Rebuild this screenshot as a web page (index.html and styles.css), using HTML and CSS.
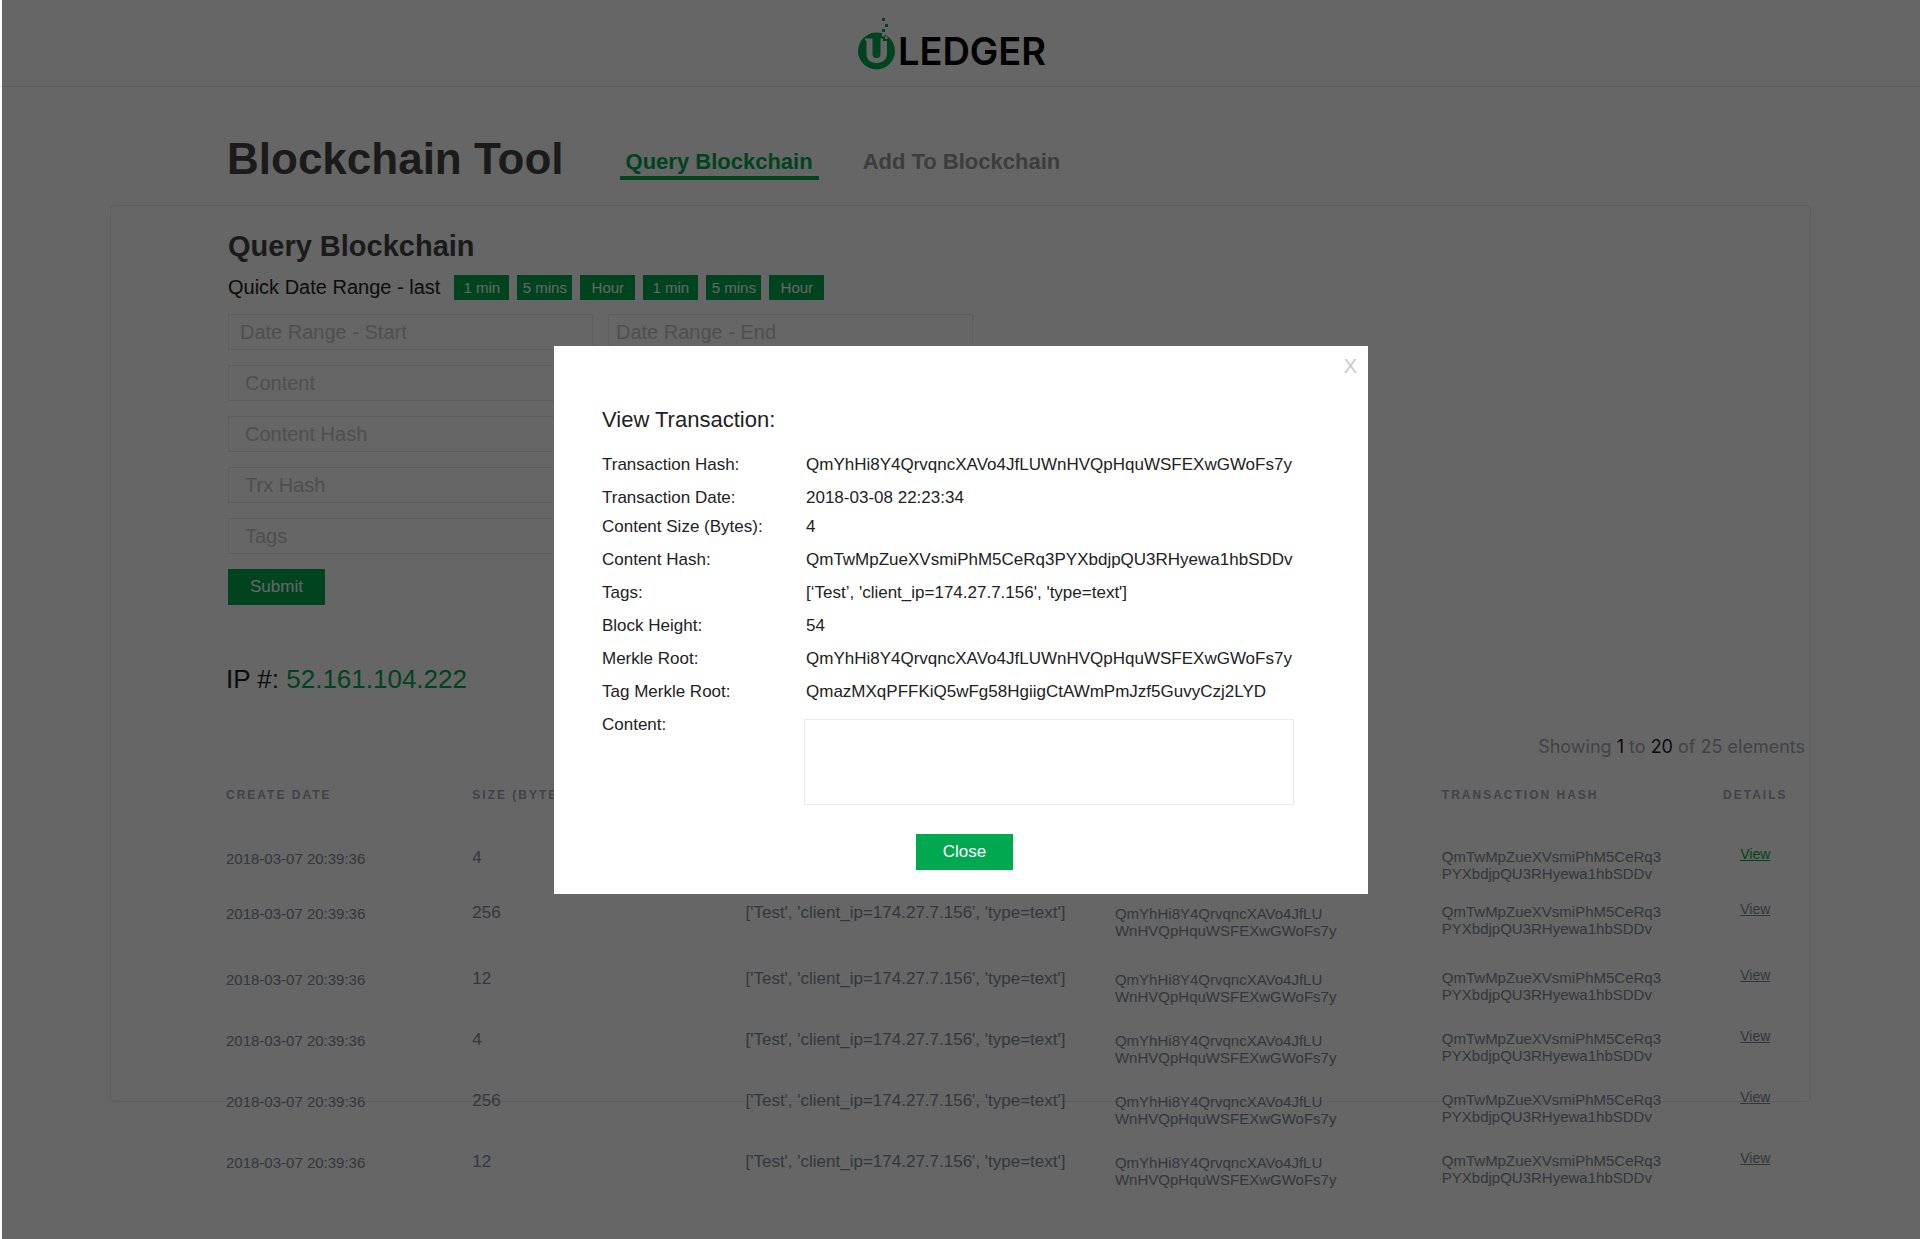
FILE: index.html
```html
<!DOCTYPE html>
<html lang="en">
<head>
<meta charset="utf-8">
<meta name="viewport" content="width=device-width, initial-scale=1">
<title>ULedger - Blockchain Tool</title>
<link rel="stylesheet" href="styles.css">
</head>
<body>
<header class="site-header">
  <a class="brand" href="#" aria-label="ULedger home">
    <svg class="brand-mark" viewBox="0 0 38 53" width="38" height="53" aria-hidden="true">
      <circle cx="18.500" cy="34" r="18.500" fill="#00a94f"/>
      <path fill="#fff" d="M7 21.500h7.500V36.500c0 3 1.200 4.500 4 4.500s4-1.500 4-4.500V24h6.500v12.500c0 6-4 9.500-10.500 9.500S8.500 42.500 8.500 36.500V24L7 23z"/>
      <path fill="#00a94f" d="M24 1h3v3h-3zM27 7h3v3h-3zM24 12h3v3h-3z"/>
      <path fill="#fff" d="M24 17h2.500v2.500H24zM27 19.500h2.500V22H27zM22.500 21.500H25V24h-2.500z"/>
    </svg>
    <span class="brand-name">LEDGER</span>
  </a>
</header>

<div class="title-bar">
  <h1 class="page-title">Blockchain Tool</h1>
  <nav class="tabs">
    <a class="tab tab-active" href="#query">Query Blockchain</a>
    <a class="tab" href="#add">Add To Blockchain</a>
  </nav>
</div>

<main class="panel">
  <section class="query" id="query">
    <h2 class="panel-title">Query Blockchain</h2>
    <div class="quick-range">
      <span class="quick-label">Quick Date Range - last</span>
      <div class="chips">
        <button class="chip" type="button">1 min</button>
        <button class="chip" type="button">5 mins</button>
        <button class="chip" type="button">Hour</button>
        <button class="chip" type="button">1 min</button>
        <button class="chip" type="button">5 mins</button>
        <button class="chip" type="button">Hour</button>
      </div>
    </div>
    <form class="query-form">
      <div class="date-fields">
        <input class="field field-start" type="text" placeholder="Date Range - Start" aria-label="Date Range - Start">
        <input class="field field-end" type="text" placeholder="Date Range - End" aria-label="Date Range - End">
      </div>
      <input class="field" type="text" placeholder="Content" aria-label="Content">
      <input class="field" type="text" placeholder="Content Hash" aria-label="Content Hash">
      <input class="field" type="text" placeholder="Trx Hash" aria-label="Trx Hash">
      <input class="field" type="text" placeholder="Tags" aria-label="Tags">
      <button class="button" type="submit">Submit</button>
    </form>
  </section>

  <p class="ip">IP #: <span class="ip-value">52.161.104.222</span></p>
  <p class="count">Showing <b>1</b> to <b>20</b> of 25 elements</p>

  <table class="results">
    <colgroup>
      <col class="col-date"><col class="col-size"><col class="col-tags"><col class="col-content"><col class="col-trx"><col class="col-details">
    </colgroup>
    <thead>
      <tr><th>Create Date</th><th>Size (Bytes)</th><th>Tags</th><th>Content Hash</th><th>Transaction Hash</th><th class="details">Details</th></tr>
    </thead>
    <tbody>
      <tr class="row-compact">
        <td>2018-03-07 20:39:36</td><td class="value">4</td><td class="value">['Test', 'client_ip=174.27.7.156', 'type=text']</td>
        <td>QmYhHi8Y4QrvqncXAVo4JfLU<br>WnHVQpHquWSFEXwGWoFs7y</td>
        <td class="trx">QmTwMpZueXVsmiPhM5CeRq3<br>PYXbdjpQU3RHyewa1hbSDDv</td>
        <td class="details"><a class="view view-current" href="#">View</a></td>
      </tr>
      <tr class="row-roomy">
        <td>2018-03-07 20:39:36</td><td class="value">256</td><td class="value">['Test', 'client_ip=174.27.7.156', 'type=text']</td>
        <td>QmYhHi8Y4QrvqncXAVo4JfLU<br>WnHVQpHquWSFEXwGWoFs7y</td>
        <td class="trx">QmTwMpZueXVsmiPhM5CeRq3<br>PYXbdjpQU3RHyewa1hbSDDv</td>
        <td class="details"><a class="view" href="#">View</a></td>
      </tr>
      <tr>
        <td>2018-03-07 20:39:36</td><td class="value">12</td><td class="value">['Test', 'client_ip=174.27.7.156', 'type=text']</td>
        <td>QmYhHi8Y4QrvqncXAVo4JfLU<br>WnHVQpHquWSFEXwGWoFs7y</td>
        <td class="trx">QmTwMpZueXVsmiPhM5CeRq3<br>PYXbdjpQU3RHyewa1hbSDDv</td>
        <td class="details"><a class="view" href="#">View</a></td>
      </tr>
      <tr>
        <td>2018-03-07 20:39:36</td><td class="value">4</td><td class="value">['Test', 'client_ip=174.27.7.156', 'type=text']</td>
        <td>QmYhHi8Y4QrvqncXAVo4JfLU<br>WnHVQpHquWSFEXwGWoFs7y</td>
        <td class="trx">QmTwMpZueXVsmiPhM5CeRq3<br>PYXbdjpQU3RHyewa1hbSDDv</td>
        <td class="details"><a class="view" href="#">View</a></td>
      </tr>
      <tr>
        <td>2018-03-07 20:39:36</td><td class="value">256</td><td class="value">['Test', 'client_ip=174.27.7.156', 'type=text']</td>
        <td>QmYhHi8Y4QrvqncXAVo4JfLU<br>WnHVQpHquWSFEXwGWoFs7y</td>
        <td class="trx">QmTwMpZueXVsmiPhM5CeRq3<br>PYXbdjpQU3RHyewa1hbSDDv</td>
        <td class="details"><a class="view" href="#">View</a></td>
      </tr>
      <tr>
        <td>2018-03-07 20:39:36</td><td class="value">12</td><td class="value">['Test', 'client_ip=174.27.7.156', 'type=text']</td>
        <td>QmYhHi8Y4QrvqncXAVo4JfLU<br>WnHVQpHquWSFEXwGWoFs7y</td>
        <td class="trx">QmTwMpZueXVsmiPhM5CeRq3<br>PYXbdjpQU3RHyewa1hbSDDv</td>
        <td class="details"><a class="view" href="#">View</a></td>
      </tr>
    </tbody>
  </table>
</main>

<div class="overlay">
  <section class="modal" role="dialog" aria-modal="true" aria-labelledby="modal-title">
    <button class="modal-x" type="button" aria-label="Close dialog">X</button>
    <h2 class="modal-title" id="modal-title">View Transaction:</h2>
    <dl class="facts">
      <dt>Transaction Hash:</dt><dd>QmYhHi8Y4QrvqncXAVo4JfLUWnHVQpHquWSFEXwGWoFs7y</dd>
      <dt>Transaction Date:</dt><dd>2018-03-08 22:23:34</dd>
      <dt>Content Size (Bytes):</dt><dd>4</dd>
      <dt>Content Hash:</dt><dd>QmTwMpZueXVsmiPhM5CeRq3PYXbdjpQU3RHyewa1hbSDDv</dd>
      <dt>Tags:</dt><dd>[‘Test’, 'client_ip=174.27.7.156', 'type=text']</dd>
      <dt>Block Height:</dt><dd>54</dd>
      <dt>Merkle Root:</dt><dd>QmYhHi8Y4QrvqncXAVo4JfLUWnHVQpHquWSFEXwGWoFs7y</dd>
      <dt>Tag Merkle Root:</dt><dd>QmazMXqPFFKiQ5wFg58HgiigCtAWmPmJzf5GuvyCzj2LYD</dd>
      <dt><label for="content">Content:</label></dt><dd class="fact-content"><textarea class="content-box" id="content"></textarea></dd>
    </dl>
    <div class="modal-actions"><button class="button" type="button">Close</button></div>
  </section>
</div>
</body>
</html>
```
FILE: styles.css
```css
* {
  box-sizing: border-box;
}

body {
  margin: 0;
  min-height: 100vh;
  background: #fff;
  color: #222;
  font-family: "Liberation Sans", Arial, sans-serif;
}

h1, h2, p, dl, dd {
  margin: 0;
}

button {
  border: 0;
  font-family: inherit;
  cursor: pointer;
}

/* Header */
.site-header {
  display: flex;
  justify-content: center;
  padding: 17px 16px 16px 0;
  border-bottom: 1px solid #e9eaf4;
}

.brand {
  display: flex;
  align-items: flex-end;
  gap: 2px;
  color: #000;
  text-decoration: none;
}

.brand-name {
  font: 600 38px/38px Inter, sans-serif;
}

/* Title and tabs */
.title-bar {
  display: flex;
  align-items: flex-end;
  gap: 56px;
  padding: 51px 109px 25px 227px;
}

.page-title {
  color: #444;
  font-size: 44px;
  line-height: 42px;
}

.tabs {
  display: flex;
  gap: 38px;
}

.tab {
  padding: 0 6px 2px;
  border-bottom: 4px solid transparent;
  color: #999;
  font-size: 22px;
  font-weight: bold;
  line-height: 24px;
  text-decoration: none;
}

.tab-active {
  border-color: #00a94f;
  color: #00a94f;
}

/* Query panel: the result rows run on past its lower edge */
.panel {
  height: 897px;
  margin: 0 109px 0 110px;
  padding: 22px 5px 0 115px;
  border: 1px solid #e9eaf4;
  border-radius: 5px;
}

.query {
  padding-left: 2px;
}

.panel-title {
  color: #444;
  font-size: 29px;
  line-height: 36px;
}

.quick-range {
  display: flex;
  align-items: center;
  gap: 14px;
  margin-top: 11px;
}

.quick-label {
  font-size: 20px;
  line-height: 25px;
}

.chips {
  display: flex;
  gap: 8px;
}

.chip {
  width: 55px;
  height: 25px;
  padding: 0;
  background: #00a94f;
  color: #fff;
  font-size: 15px;
}

.query-form {
  display: flex;
  flex-direction: column;
  align-items: flex-start;
  gap: 15px;
  max-width: 745px;
  margin-top: 14px;
}

.date-fields {
  display: grid;
  grid-template-columns: 1fr 1fr;
  gap: 15px;
  width: 100%;
}

.field {
  width: 100%;
  height: 36px;
  padding: 0 16px;
  border: 1px solid #ececec;
  background: #fff;
  font-family: inherit;
  font-size: 20px;
}

.field-start {
  padding: 0 11px;
}

.field-end {
  padding: 0 7px;
}

.field::placeholder {
  color: #c6c6c6;
  opacity: 1;
}

.button {
  width: 97px;
  height: 36px;
  padding: 0;
  background: #00a94f;
  color: #fff;
  font-size: 17px;
}

.ip {
  margin-top: 58px;
  font-size: 26px;
  line-height: 32px;
}

.ip-value {
  color: #00a94f;
}

.count {
  margin-top: 40px;
  color: #a6a6b4;
  font: 18px/24px Inter, sans-serif;
  text-align: right;
}

.count b {
  color: #1c1c2c;
  font-weight: 400;
}

/* Results */
.results {
  width: 100%;
  margin-top: 28px;
  border-collapse: collapse;
  table-layout: fixed;
  color: #838a97;
  font-size: 15px;
  line-height: 17px;
}

.col-date { width: 15.6%; }
.col-size { width: 17.3%; }
.col-tags { width: 23.4%; }
.col-content { width: 20.7%; }
.col-trx { width: 16.7%; }
.col-details { width: 6.3%; }

.results th {
  height: 58px;
  padding: 0;
  color: #a6a6b4;
  font-size: 12px;
  letter-spacing: 2px;
  text-align: left;
  text-transform: uppercase;
  vertical-align: top;
}

.results td {
  height: 61px;
  padding: 5px 0 0;
  vertical-align: top;
}

.results .row-compact td { height: 55px; }
.results .row-roomy td { height: 66px; }

.results .value {
  padding-top: 4px;
  font-size: 17px;
}

.results .trx {
  padding-top: 3px;
}

.results .details {
  padding-top: 0;
  text-align: center;
}

.view {
  color: inherit;
  font-size: 14px;
}

.view-current {
  color: #00a94f;
}

/* Dialog */
.overlay {
  position: fixed;
  inset: 0 0 0 2px;
  display: flex;
  align-items: center;
  justify-content: center;
  background: rgba(0, 0, 0, 0.6);
}

.modal {
  position: relative;
  width: 814px;
  padding: 60px 74px 24px 48px;
  background: #fff;
}

.modal-x {
  position: absolute;
  top: 8px;
  right: 9px;
  padding: 0 2px;
  background: none;
  color: #ccc;
  font-size: 20px;
  line-height: 24px;
}

.modal-title {
  font-size: 22px;
  font-weight: normal;
  line-height: 28px;
}

.facts {
  display: grid;
  grid-template-columns: 202px 1fr;
  grid-template-rows: 33px 29px;
  grid-auto-rows: minmax(33px, auto);
  margin-top: 21px;
  font-size: 17px;
  line-height: 20px;
}

.facts dd {
  padding-left: 2px;
}

.facts .fact-content {
  padding: 4px 0 0;
}

.content-box {
  display: block;
  width: 100%;
  height: 86px;
  border: 1px solid #eaeaea;
  resize: none;
}

.modal-actions {
  display: flex;
  justify-content: center;
  margin-top: 29px;
  padding-left: 33px;
}
```
